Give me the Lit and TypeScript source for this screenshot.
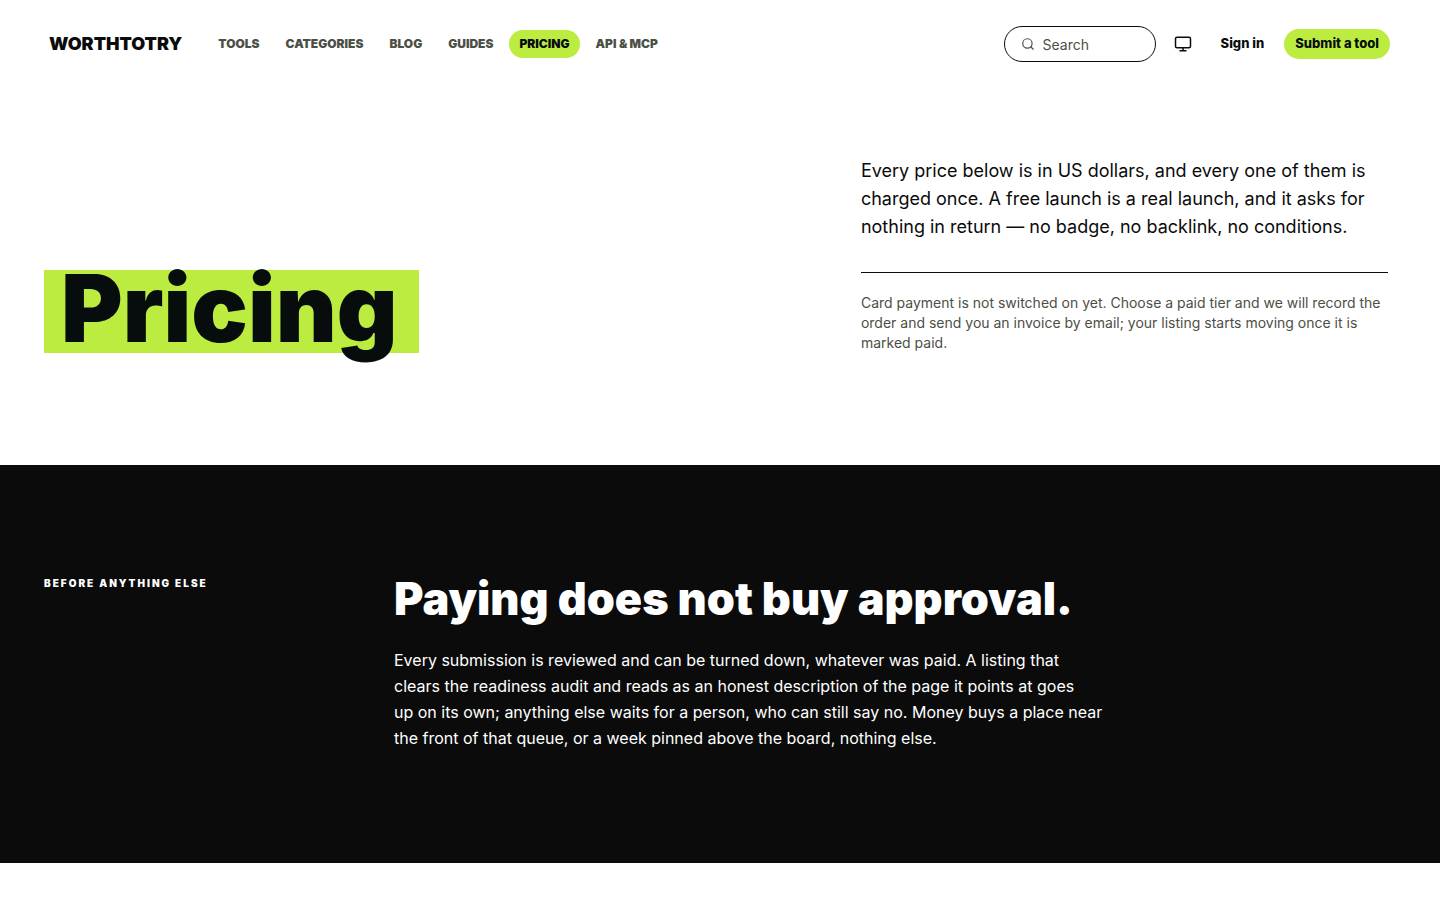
import { LitElement, html, css } from "lit";
import { customElement, property } from "lit/decorators.js";
import { classMap } from "lit/directives/class-map.js";

const NAV = ["Tools", "Categories", "Blog", "Guides", "Pricing", "API & MCP"];

@customElement("site-header")
class SiteHeader extends LitElement {
  @property() current = "Pricing";

  static styles = css`
    :host {
      display: block;
    }
    .bar {
      display: flex;
      align-items: center;
      min-height: 88px;
      padding: 0 50px 0 49px;
      box-sizing: border-box;
    }
    a {
      color: inherit;
      text-decoration: none;
    }
    .logo {
      font-size: 18px;
      font-weight: 900;
      line-height: 24px;
      color: #0b0b0b;
    }
    .nav {
      display: flex;
      gap: 6px;
      margin-left: 26px;
      font-size: 12px;
      font-weight: 900;
      line-height: 16px;
      text-transform: uppercase;
      white-space: nowrap;
      color: #4c4f45;
    }
    .nav-link {
      padding: 6px 10px;
      border-radius: 14px;
    }
    .current {
      background: #bdec40;
      color: #070d0d;
    }
    .actions {
      display: flex;
      align-items: center;
      gap: 9px;
      margin-left: auto;
    }
    .search {
      display: flex;
      align-items: center;
      gap: 8px;
      width: 152px;
      height: 36px;
      padding: 0 16px;
      border: 1px solid #0b0b0b;
      border-radius: 18px;
      box-sizing: border-box;
      color: #4c4f45;
    }
    .search-input {
      flex: 1;
      min-width: 0;
      padding: 0;
      border: 0;
      outline: 0;
      background: none;
      font: inherit;
      font-size: 14px;
      color: inherit;
    }
    .search-input::placeholder {
      color: #4c4f45;
      opacity: 1;
    }
    .search-icon {
      flex: none;
      width: 14px;
      height: 14px;
    }
    .theme {
      display: grid;
      place-items: center;
      width: 36px;
      height: 36px;
      padding: 0;
      border: 0;
      background: none;
      color: #0b0b0b;
    }
    .theme-icon {
      width: 18px;
      height: 18px;
    }
    .text-link,
    .cta {
      padding: 6px 11px 8px;
      font-size: 13px;
      font-weight: 800;
      line-height: 16px;
      white-space: nowrap;
      color: #070d0d;
    }
    .cta {
      border-radius: 15px;
      background: #bdec40;
    }
  `;

  render() {
    return html`
      <header class="bar">
        <a class="logo" href="#">WORTHTOTRY</a>
        <nav class="nav" aria-label="Main">
          ${NAV.map(
            (name) => html`<a
              href="#"
              class=${classMap({ "nav-link": true, current: name === this.current })}
              >${name}</a
            >`
          )}
        </nav>
        <div class="actions">
          <label class="search">
            <svg class="search-icon" viewBox="0 0 24 24" fill="none" stroke="currentColor" stroke-width="2" stroke-linecap="round" stroke-linejoin="round" aria-hidden="true">
              <circle cx="11" cy="11" r="8" />
              <path d="m21 21-4.3-4.3" />
            </svg>
            <input class="search-input" type="text" placeholder="Search" aria-label="Search" />
          </label>
          <button class="theme" type="button" aria-label="Theme">
            <svg class="theme-icon" viewBox="0 0 24 24" fill="none" stroke="currentColor" stroke-width="2" stroke-linecap="round" stroke-linejoin="round" aria-hidden="true">
              <rect x="2" y="3" width="20" height="14" rx="2" />
              <path d="M8 21h8M12 17v4" />
            </svg>
          </button>
          <a class="text-link" href="#">Sign in</a>
          <a class="cta" href="#">Submit a tool</a>
        </div>
      </header>
    `;
  }
}

@customElement("app-root")
class AppRoot extends LitElement {
  static styles = css`
    :host {
      display: block;
      min-height: 100vh;
      background: #fff;
      color: #0b0b0b;
      font-family: Inter, "Liberation Sans", sans-serif;
    }
    h1,
    h2,
    p {
      margin: 0;
    }
    .hero {
      display: grid;
      grid-template-columns: 10fr 7fr;
      gap: 64px;
      align-items: end;
      padding: 69px 52px 112px 44px;
    }
    .title {
      justify-self: start;
      padding: 0 21px 6px 17px;
      background: #bdec40;
      color: #070d0d;
      font-size: 94px;
      font-weight: 900;
      line-height: 77px;
    }
    .lead {
      padding-bottom: 31px;
      border-bottom: 1px solid #0b0b0b;
      font-size: 18px;
      line-height: 28px;
    }
    .note {
      padding-top: 20px;
      font-size: 14px;
      line-height: 20px;
      color: #4c4f45;
    }
    .promise {
      display: grid;
      grid-template-columns: 286px 1fr;
      gap: 64px;
      padding: 112px 52px 112px 44px;
      background: #0b0b0b;
      color: #fff;
    }
    .eyebrow {
      font-size: 10px;
      font-weight: 900;
      line-height: 13px;
      letter-spacing: 2px;
      text-transform: uppercase;
    }
    .headline {
      font-size: 45px;
      font-weight: 900;
      line-height: 44px;
    }
    .body {
      max-width: 712px;
      margin-top: 26px;
      font-size: 16px;
      line-height: 26px;
    }
  `;

  render() {
    return html`
      <site-header current="Pricing"></site-header>
      <main>
        <section class="hero">
          <h1 class="title">Pricing</h1>
          <div>
            <p class="lead">
              Every price below is in US dollars, and every one of them is charged once. A free
              launch is a real launch, and it asks for nothing in return — no badge, no backlink,
              no conditions.
            </p>
            <p class="note">
              Card payment is not switched on yet. Choose a paid tier and we will record the order
              and send you an invoice by email; your listing starts moving once it is marked paid.
            </p>
          </div>
        </section>
        <section class="promise">
          <p class="eyebrow">Before anything else</p>
          <div>
            <h2 class="headline">Paying does not buy approval.</h2>
            <p class="body">
              Every submission is reviewed and can be turned down, whatever was paid. A listing that
              clears the readiness audit and reads as an honest description of the page it points at
              goes<br />
              up on its own; anything else waits for a person, who can still say no. Money buys a
              place near the front of that queue, or a week pinned above the board, nothing else.
            </p>
          </div>
        </section>
      </main>
    `;
  }
}
